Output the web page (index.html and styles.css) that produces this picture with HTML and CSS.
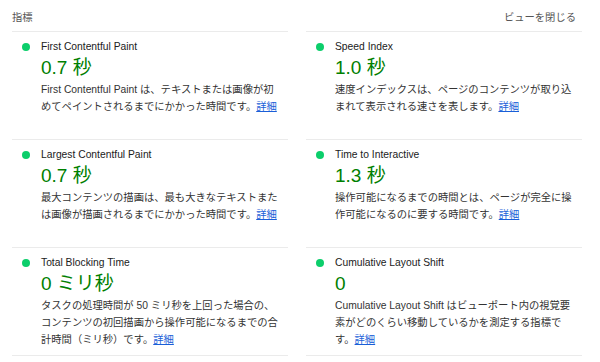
FILE: index.html
```html
<!DOCTYPE html>
<html lang="ja">
<head>
<meta charset="utf-8">
<link rel="stylesheet" href="styles.css">
</head>
<body>
<div class="panel">
  <div class="head">
    <div class="head-cell">指標</div>
    <div class="head-cell head-right">ビューを閉じる</div>
  </div>
  <div class="grid">
    <div class="metric">
      <span class="dot"></span>
      <div class="body">
        <div class="title">First Contentful Paint</div>
        <div class="value">0.7 秒</div>
        <div class="desc">First Contentful Paint は、テキストまたは画像が初めてペイントされるまでにかかった時間です。<a href="#">詳細</a></div>
      </div>
    </div>
    <div class="metric">
      <span class="dot"></span>
      <div class="body">
        <div class="title">Speed Index</div>
        <div class="value">1.0 秒</div>
        <div class="desc">速度インデックスは、ページのコンテンツが取り込まれて表示される速さを表します。<a href="#">詳細</a></div>
      </div>
    </div>
    <div class="metric">
      <span class="dot"></span>
      <div class="body">
        <div class="title">Largest Contentful Paint</div>
        <div class="value">0.7 秒</div>
        <div class="desc">最大コンテンツの描画は、最も大きなテキストまたは画像が描画されるまでにかかった時間です。<a href="#">詳細</a></div>
      </div>
    </div>
    <div class="metric">
      <span class="dot"></span>
      <div class="body">
        <div class="title">Time to Interactive</div>
        <div class="value">1.3 秒</div>
        <div class="desc">操作可能になるまでの時間とは、ページが完全に操作可能になるのに要する時間です。<a href="#">詳細</a></div>
      </div>
    </div>
    <div class="metric">
      <span class="dot"></span>
      <div class="body">
        <div class="title">Total Blocking Time</div>
        <div class="value">0 ミリ秒</div>
        <div class="desc">タスクの処理時間が 50 ミリ秒を上回った場合の、コンテンツの初回描画から操作可能になるまでの合計時間（ミリ秒）です。<a href="#">詳細</a></div>
      </div>
    </div>
    <div class="metric">
      <span class="dot"></span>
      <div class="body">
        <div class="title">Cumulative Layout Shift</div>
        <div class="value">0</div>
        <div class="desc">Cumulative Layout Shift はビューポート内の視覚要素がどのくらい移動しているかを測定する指標です。<a href="#">詳細</a></div>
      </div>
    </div>
  </div>
</div>
</body>
</html>
```
FILE: styles.css
```css
html, body {
  margin: 0;
  background: #ffffff;
}
body {
  font-family: "Liberation Sans", "Noto Sans CJK JP", sans-serif;
  color: #212121;
}
.panel {
  padding: 0 18px 0 12px;
}
.head {
  display: grid;
  grid-template-columns: 1fr 1fr;
  column-gap: 18px;
}
.head-cell {
  height: 32px;
  box-sizing: border-box;
  border-bottom: 1px solid #ebebeb;
  font-size: 10.3px;
  line-height: 14px;
  padding-top: 11px;
  color: #555555;
}
.head-right {
  text-align: right;
  padding-right: 6px;
}
.grid {
  display: grid;
  grid-template-columns: 1fr 1fr;
  column-gap: 18px;
}
.metric {
  display: grid;
  grid-template-columns: 29px 1fr;
  height: 108px;
  box-sizing: border-box;
  border-bottom: 1px solid #ebebeb;
  padding: 8px 6px 0 0;
}
.dot {
  width: 8px;
  height: 8px;
  border-radius: 50%;
  background: #0cce6b;
  margin: 3px 0 0 10px;
}
.title {
  font-size: 10.3px;
  line-height: 14px;
  color: #212121;
}
.value {
  font-size: 19px;
  line-height: 26px;
  margin-top: 1px;
  color: #008000;
}
.desc {
  font-size: 10.3px;
  line-height: 17px;
  color: #333333;
}
.desc a {
  color: #1a5fd8;
  text-decoration: underline;
}
```
